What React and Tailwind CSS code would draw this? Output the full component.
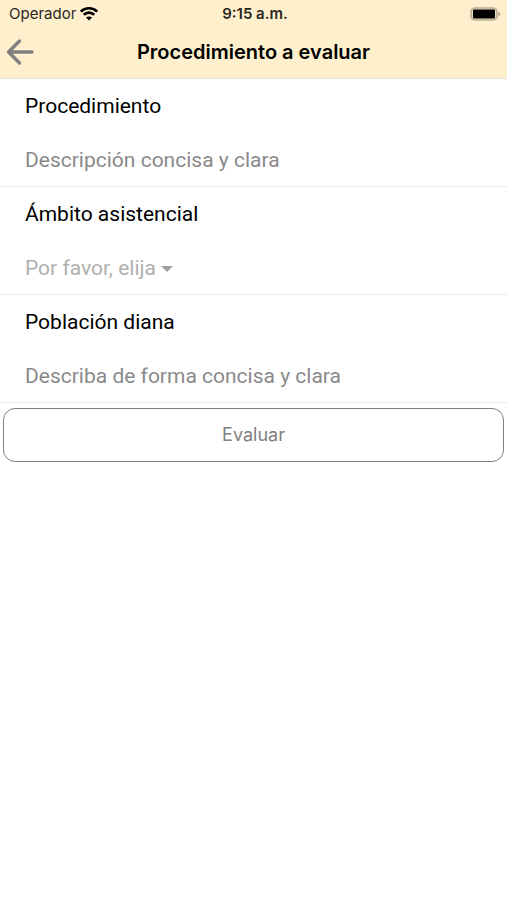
import React from "react";

function Field({ id, label, children }) {
  return (
    <div className="flex h-27 flex-col border-b border-[#ebebeb] pt-px pl-[25px] font-['Roboto',sans-serif] text-[21px]">
      <label htmlFor={id} className="flex h-[54px] items-center text-black">
        {label}
      </label>
      <div className="flex h-[52px] items-center pt-px">{children}</div>
    </div>
  );
}

export default function App() {
  return (
    <div className="min-h-screen bg-white font-['Inter',sans-serif]">
      <header className="border-b border-[#ece3cb] bg-[#fff0cd]">
        <div className="grid h-7 grid-cols-3 items-center pr-[6px] pl-[9px] text-[15px] text-[#2a271f]">
          <div className="flex items-center gap-[3px]">
            <span>Operador</span>
            <svg className="h-[14px] w-5" viewBox="0 0 20 14" aria-hidden="true">
              <path d="M1.800 4.600C6.200.2 13.800.2 18.200 4.600M4.800 7.800c3-2.900 7.400-2.900 10.400 0" fill="none" stroke="#000" strokeWidth="2.600" />
              <path d="M10 13.600 7 10.600c1.700-1.600 4.300-1.600 6 0z" />
            </svg>
          </div>
          <span className="text-center font-semibold">9:15 a.m.</span>
          <svg className="h-[14px] w-[31px] justify-self-end" viewBox="0 0 31 14" aria-hidden="true">
            <rect x="1" y="1" width="26" height="12" rx="4" fill="#e6dabb" stroke="#b9af95" strokeWidth="1.600" />
            <rect x="3" y="2.500" width="22" height="9" rx="1" />
            <path d="M28.500 4.500c2.400.8 2.400 4.200 0 5z" fill="#b0a68d" />
          </svg>
        </div>
        <div className="grid h-[50px] grid-cols-[40px_1fr_40px] items-center pb-0.5">
          <button type="button" aria-label="Volver" className="pl-1.5">
            <svg className="h-7 w-7" viewBox="0 0 28 28" fill="none" stroke="#808080" strokeWidth="3.400" strokeLinecap="round" strokeLinejoin="round" aria-hidden="true">
              <path d="M13.500 3 2.500 14l11 11M2.500 14H26" />
            </svg>
          </button>
          <h1 className="text-center text-xl font-semibold text-black">Procedimiento a evaluar</h1>
        </div>
      </header>
      <form>
        <Field id="proc" label="Procedimiento">
          <input id="proc" placeholder="Descripción concisa y clara" className="w-full text-black outline-none placeholder:text-[#8a8a8a]" />
        </Field>
        <Field id="ambito" label="Ámbito asistencial">
          <select id="ambito" className="appearance-none text-[#b0b0b0] outline-none">
            <option>Por favor, elija</option>
          </select>
          <svg className="ml-[5px] h-1.5 w-3" viewBox="0 0 12 6" fill="#a0a0a0" aria-hidden="true">
            <path d="M0 0h12L6 6z" />
          </svg>
        </Field>
        <Field id="pob" label="Población diana">
          <input id="pob" placeholder="Describa de forma concisa y clara" className="w-full text-black outline-none placeholder:text-[#8a8a8a]" />
        </Field>
        <div className="px-[3px] pt-[5px]">
          <button type="button" className="h-[54px] w-full rounded-xl border border-[#808080] text-lg text-[#808080]">
            Evaluar
          </button>
        </div>
      </form>
    </div>
  );
}
